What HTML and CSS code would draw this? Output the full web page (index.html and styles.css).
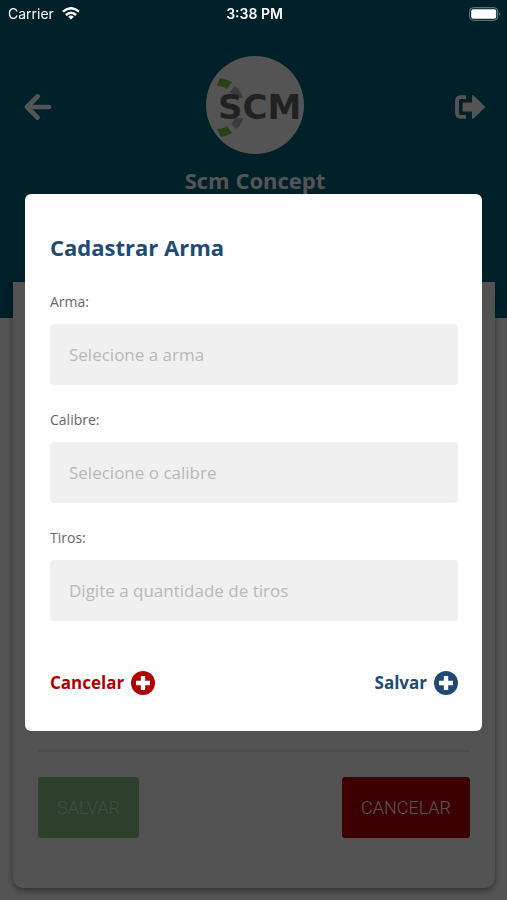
FILE: index.html
```html
<!DOCTYPE html>
<html lang="pt-BR">
<head>
<meta charset="utf-8">
<meta name="viewport" content="width=device-width, initial-scale=1">
<title>Cadastrar Arma</title>
<link rel="stylesheet" href="styles.css">
</head>
<body>
<div class="status">
  <span class="carrier">Carrier
    <svg width="18" height="13" viewBox="0 0 18 13" fill="none" stroke="#fff" stroke-width="2.4" aria-hidden="true"><path d="M1 4.7Q9-2.3 17 4.7"/><path d="M3.9 8Q9 3.4 14.1 8"/><path d="M9 12.5 6.2 9.7Q9 7.4 11.8 9.7Z" fill="#fff" stroke="none"/></svg>
  </span>
  <span class="clock">3:38 PM</span>
  <span class="battery">
    <svg width="32" height="14" viewBox="0 0 32 14" aria-hidden="true"><rect x=".7" y=".7" width="28" height="12.6" rx="3.6" fill="none" stroke="#6f8586"/><rect x="2.2" y="2.2" width="25" height="9.6" rx="2" fill="#fff"/><path d="M30 5q1.8 2 0 4z" fill="#8b9d9f"/></svg>
  </span>
</div>

<header class="header">
  <a class="nav" href="#voltar" aria-label="Voltar">
    <svg width="28" height="26" viewBox="0 0 28 26" fill="none" stroke="#fff" stroke-width="4.6" stroke-linejoin="round" stroke-linecap="round" aria-hidden="true"><path d="M25 13H4"/><path d="M13.500 2.500 3 13l10.500 10.500"/></svg>
  </a>
  <div class="brand">
    <svg class="logo" width="98" height="98" viewBox="0 0 98 98" role="img" aria-label="SCM">
      <defs><clipPath id="round"><circle cx="49" cy="49" r="48"/></clipPath></defs>
      <circle cx="49" cy="49" r="49" fill="#fff"/>
      <g fill="#7cc04a"><path d="M14 22Q20 23 26 26L21 33Q17 30 11 30Z"/><path d="M11 73Q17 73 21 70L26 77Q21 80 15 81Z"/></g>
      <g fill="#b4b4b4"><path d="M29 30Q35 34 37 42H29Q28 39 24 36Z"/><path d="M28 62H37Q36 69 30 73L25 68Q28 65 28 62Z"/></g>
      <text class="wordmark" x="12" y="63" clip-path="url(#round)">SCM</text>
    </svg>
    <h1 class="name">Scm Concept</h1>
  </div>
  <a class="nav nav-end" href="#sair" aria-label="Sair">
    <svg width="32" height="24" viewBox="0 0 32 24" aria-hidden="true"><path d="M12 2.200H6.500Q3 2.200 3 6v12q0 3.800 3.500 3.800H12" fill="none" stroke="#fff" stroke-width="3.8"/><path d="M9.500 7.500H18V1q0-1.500 1.500-.5L30.500 11q1 1 0 2L19.500 23.500q-1.500 1-1.500-.5v-6.500H9.500q-1 0-1-1v-7q0-1 1-1z" fill="#fff"/></svg>
  </a>
</header>

<main class="card">
  <div class="card-actions">
    <button class="btn btn-save" type="button">SALVAR</button>
    <button class="btn btn-cancel" type="button">CANCELAR</button>
  </div>
</main>

<div class="overlay">
  <form class="modal" role="dialog" aria-modal="true" aria-labelledby="title">
    <h2 class="title" id="title">Cadastrar Arma</h2>
    <div class="field">
      <label for="arma">Arma:</label>
      <select id="arma"><option>Selecione a arma</option></select>
    </div>
    <div class="field">
      <label for="calibre">Calibre:</label>
      <select id="calibre"><option>Selecione o calibre</option></select>
    </div>
    <div class="field">
      <label for="tiros">Tiros:</label>
      <input id="tiros" type="text" inputmode="numeric" placeholder="Digite a quantidade de tiros">
    </div>
    <div class="modal-actions">
      <button class="action action-cancel" type="button">Cancelar
        <svg width="24" height="24" viewBox="0 0 24 24" aria-hidden="true"><circle cx="12" cy="12" r="12" fill="currentColor"/><path d="M12 5v14M5 12h14" stroke="#fff" stroke-width="4.400"/></svg>
      </button>
      <button class="action action-save" type="button">Salvar
        <svg width="24" height="24" viewBox="0 0 24 24" aria-hidden="true"><circle cx="12" cy="12" r="12" fill="currentColor"/><path d="M12 5v14M5 12h14" stroke="#fff" stroke-width="4.400"/></svg>
      </button>
    </div>
  </form>
</div>
</body>
</html>
```
FILE: styles.css
```css
* {
  box-sizing: border-box;
}

body {
  margin: 0;
  min-height: 100vh;
  display: flex;
  flex-direction: column;
  background: #fff;
  font-family: "Open Sans", "Noto Sans", sans-serif;
}

button,
select,
input {
  font: inherit;
  border: 0;
  margin: 0;
}

/* Status bar, kept above the dimmed page */
.status {
  position: fixed;
  inset: 0 0 auto;
  z-index: 3;
  display: grid;
  grid-template-columns: 1fr auto 1fr;
  align-items: center;
  height: 27px;
  padding: 0 6px 0 8px;
  color: #fff;
  font: 14px/20px Inter, sans-serif;
}

.carrier {
  display: flex;
  align-items: center;
  gap: 8px;
}

.clock {
  font-weight: 600;
}

.battery {
  display: flex;
  justify-content: flex-end;
}

/* Page */
.header {
  display: grid;
  grid-template-columns: 1fr auto 1fr;
  align-items: start;
  min-height: 318px;
  padding: 56px 21px 0 24px;
  background: #00617f;
}

.nav {
  display: flex;
  align-items: center;
  height: 102px;
}

.nav-end {
  justify-content: flex-end;
}

.brand {
  display: flex;
  flex-direction: column;
  align-items: center;
}

.wordmark {
  font: bold 34px "DejaVu Sans", sans-serif;
  fill: #666;
}

.name {
  margin: 11px 0 0;
  color: #fff;
  font-size: 22px;
  line-height: 30px;
}

.card {
  flex: 1;
  display: flex;
  flex-direction: column;
  justify-content: flex-end;
  margin: -36px 12px 12px 13px;
  padding: 0 25px 50px;
  border-radius: 0 0 10px 10px;
  background: #f8f8f8;
  box-shadow: 0 3px 6px rgba(0, 0, 0, 0.4);
}

.card-actions {
  display: flex;
  justify-content: space-between;
  padding-top: 25px;
  border-top: 2px solid #e4e4e4;
}

.btn {
  height: 61px;
  padding: 0 19px;
  border-radius: 3px;
  color: #fff;
  font: 300 18px/24px Roboto, sans-serif;
}

.btn-save {
  background: #87c387;
  color: #fff9;
}

.btn-cancel {
  background: #b80000;
}

/* Dialog */
.overlay {
  position: fixed;
  inset: 0;
  z-index: 2;
  display: flex;
  align-items: center;
  padding: 25px 25px 0;
  background: rgba(0, 0, 0, 0.67);
}

.modal {
  flex: 1;
  padding: 36px 24px 36px 25px;
  border-radius: 6px;
  background: #fff;
}

.title {
  margin: 0 0 26px;
  color: #204a75;
  font-size: 22px;
  line-height: 34px;
}

.field {
  display: flex;
  flex-direction: column;
  gap: 10px;
  margin-bottom: 23px;
}

.field label {
  color: #666;
  font-size: 14px;
  line-height: 24px;
}

.field select,
.field input {
  appearance: none;
  width: 100%;
  height: 61px;
  padding: 0 19px;
  border-radius: 4px;
  background: #f0f0f0;
  color: #b8b8b8;
  font-size: 17px;
}

.field input::placeholder {
  color: #b8b8b8;
  opacity: 1;
}

.modal-actions {
  display: flex;
  justify-content: space-between;
  padding-top: 27px;
}

.action {
  display: flex;
  align-items: center;
  gap: 7px;
  padding: 0;
  background: none;
  font-size: 17px;
  font-weight: 700;
  line-height: 24px;
}

.action-cancel {
  color: #b00000;
}

.action-save {
  color: #204a75;
}
```
